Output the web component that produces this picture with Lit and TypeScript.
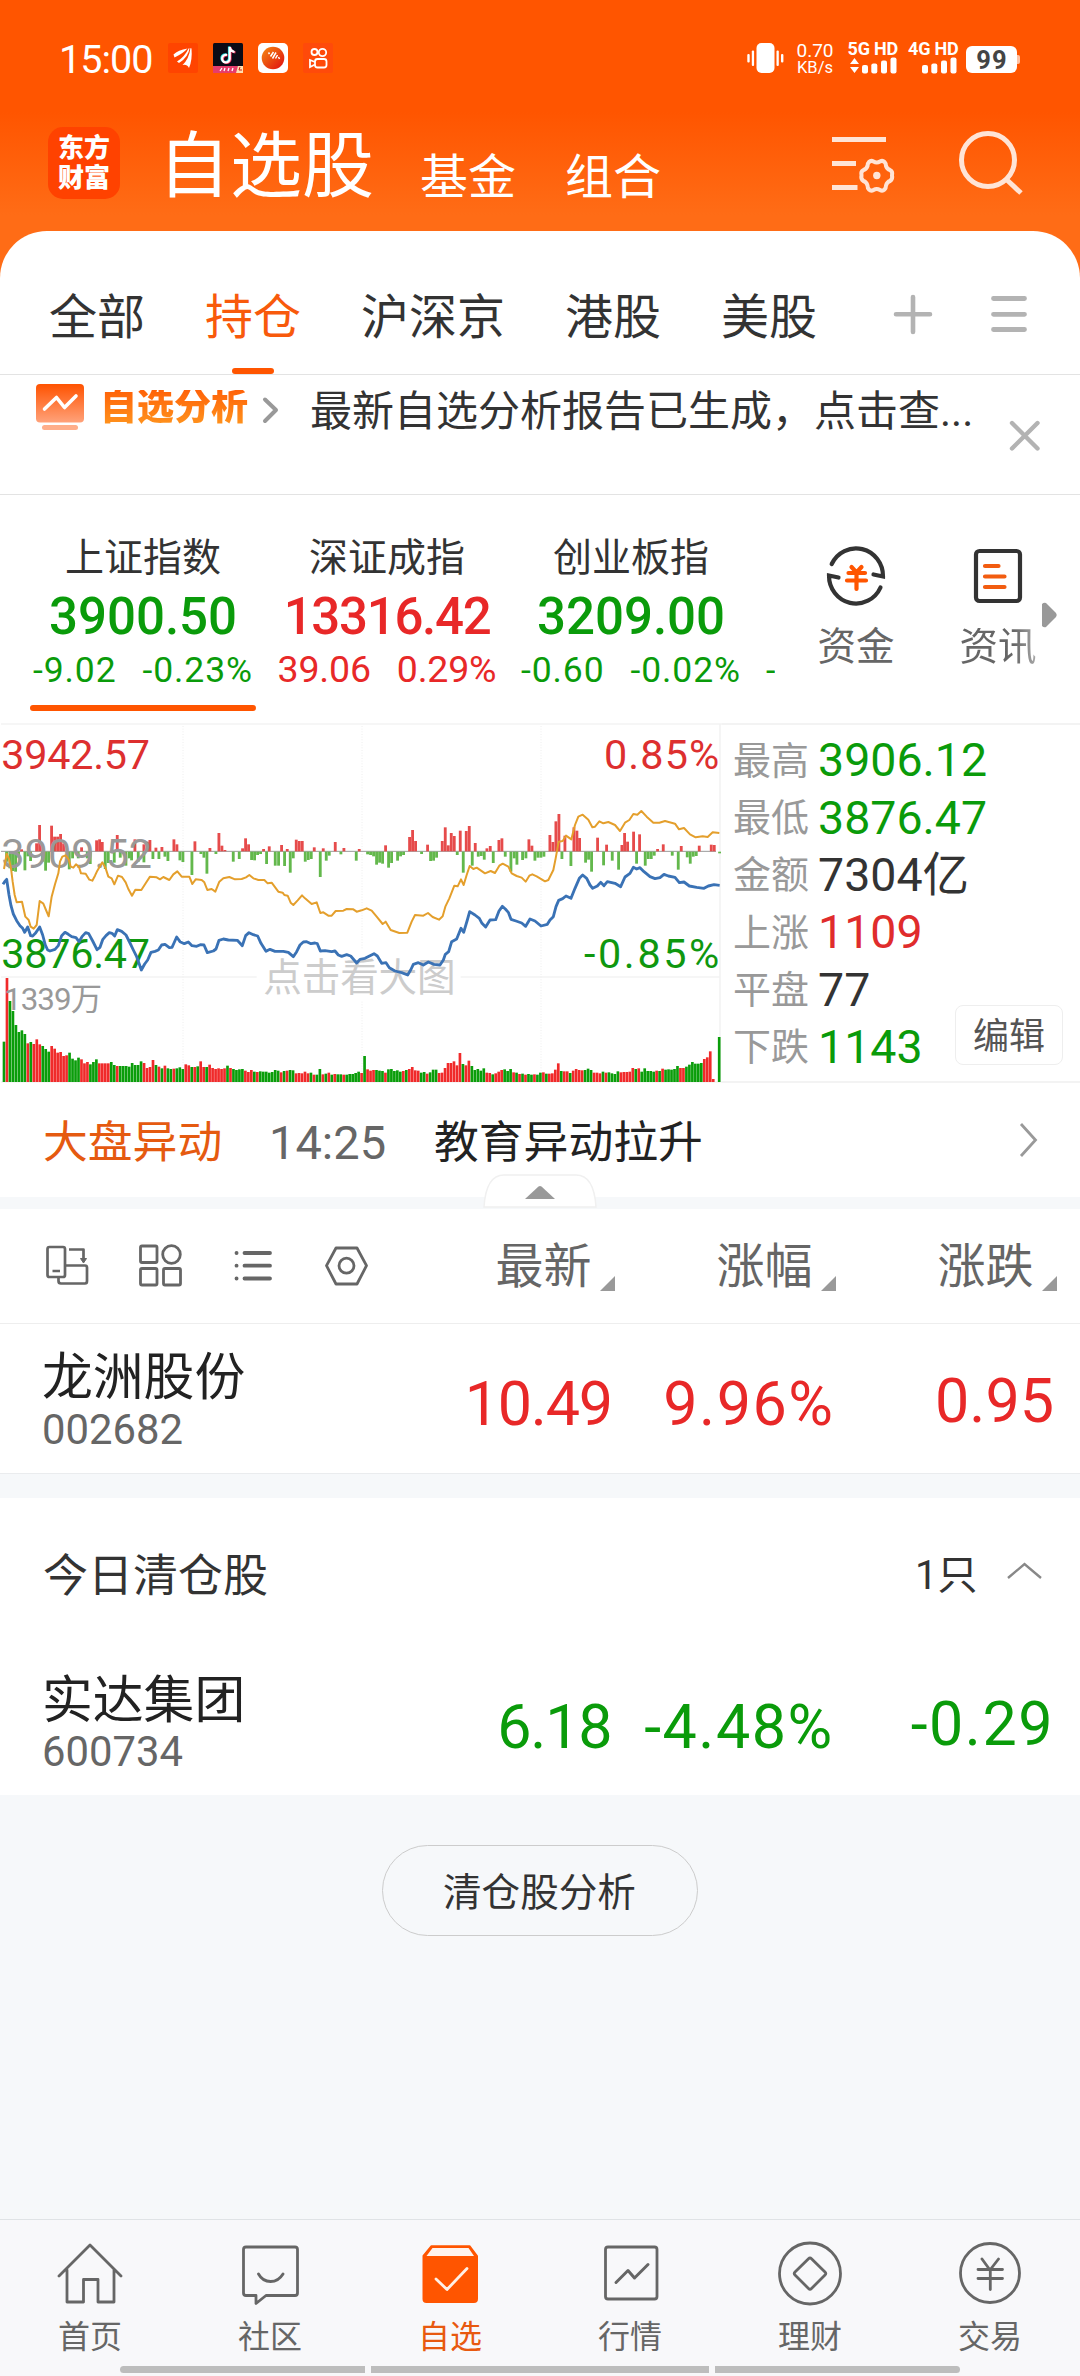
import { LitElement, html, css, svg } from "lit";
import { customElement } from "lit/decorators.js";

const BLUE =
  "9,508 14,500 20,493 27,540 33,572 40,597 50,617 60,632 68,640 74,652 83,636 92,662 98,663 106,655 119,636 128,660 136,690 143,705 150,708 165,703 175,692 185,662 195,652 205,658 215,665 228,668 237,680 246,665 257,653 266,656 278,678 291,704 300,697 308,674 318,662 328,653 336,655 344,663 352,644 365,649 378,660 390,684 400,705 410,725 418,748 424,765 434,747 443,735 453,712 465,709 475,705 485,690 495,688 508,698 516,697 522,684 530,666 540,680 553,686 565,681 576,692 590,694 601,689 612,690 622,713 640,708 648,702 657,676 670,672 685,675 712,676 727,692 737,662 747,653 760,659 773,663 783,685 798,709 810,703 825,709 850,709 865,712 880,725 890,710 900,690 910,681 920,680 933,686 945,684 952,686 961,708 975,707 995,710 1005,708 1015,720 1025,724 1040,719 1052,723 1070,744 1080,733 " +
  "1095,730 1110,722 1122,716 1132,723 1145,745 1158,743 1168,758 1185,768 1205,773 1223,780 1232,765 1240,748 1255,743 1270,750 1285,741 1302,748 1320,750 1330,735 1336,718 1346,710 1355,680 1370,672 1383,640 1391,652 1402,615 1409,590 1425,600 1438,610 1446,625 1457,636 1470,615 1487,614 1497,588 1507,574 1516,582 1525,592 1533,613 1548,618 1565,624 1577,634 1590,612 1605,618 1623,633 1642,628 1650,615 1660,605 1668,575 1676,556 1688,551 1698,543 1713,550 1725,520 1738,490 1748,480 1760,490 1770,510 1778,520 1792,513 1802,502 1812,512 1822,500 1845,505 1862,515 1875,486 1890,475 1900,457 1910,462 1920,458 1932,470 1950,485 1965,491 1980,488 1992,478 2005,483 2025,487 2038,503 2052,501 2068,513 2090,517 2112,520 2125,513 2142,509 2159,511";

const GOLD =
  "12,462 20,416 27,432 33,460 38,500 44,540 50,562 66,560 76,605 86,615 92,635 101,641 110,630 119,558 130,566 138,585 146,604 155,545 165,508 175,475 180,440 187,425 197,421 207,435 212,455 220,458 228,448 237,456 243,475 257,476 268,494 277,497 285,482 292,467 307,442 317,460 325,485 335,490 343,508 354,482 366,486 377,502 385,522 396,542 406,524 424,525 438,503 450,485 470,487 480,493 490,486 508,495 520,478 532,469 545,485 568,485 577,507 587,493 605,495 613,502 622,525 635,522 646,530 658,500 670,490 688,486 705,493 725,492 738,487 748,480 760,490 775,495 793,495 803,505 815,503 835,530 848,533 853,540 863,542 872,563 880,570 893,556 906,541 915,550 935,567 950,562 961,594 970,592 985,602 995,602 1007,588 1030,587 1040,582 1060,583 1070,590 " +
  "1085,586 1100,580 1115,587 1130,605 1148,627 1157,620 1172,645 1198,654 1222,653 1235,620 1245,600 1270,602 1284,594 1298,606 1317,614 1328,604 1336,575 1348,550 1363,512 1373,514 1383,493 1391,510 1400,480 1409,453 1420,462 1430,458 1455,475 1472,468 1485,474 1498,452 1508,446 1525,455 1535,475 1550,483 1565,488 1577,500 1588,482 1597,478 1610,484 1635,499 1645,495 1660,465 1667,430 1676,380 1688,378 1698,362 1714,373 1725,330 1735,305 1748,299 1765,314 1777,337 1785,335 1798,319 1810,325 1825,321 1845,330 1860,348 1875,323 1888,315 1900,297 1912,299 1924,288 1940,305 1960,323 1978,323 1995,318 2025,326 2037,343 2052,339 2070,358 2087,367 2108,364 2123,366 2138,352 2158,354";

const GAINS =
  "65,403 110,385 119,330 128,390 155,332 164,365 173,365 182,357 191,385 245,397 290,376 299,373 307,381 352,360 405,373 432,388 442,380 450,375 468,398 486,396 522,373 531,388 585,379 630,399 657,354 666,392 675,405 728,400 737,370 746,388 791,402 808,394 845,390 862,402 889,374 898,378 907,378 943,397 970,400 1006,381 1032,399 1078,402 " +
  "1157,391 1229,366 1238,345 1247,378 1283,389 1327,378 1336,337 1345,391 1354,354 1363,363 1381,347 1399,348 1408,333 1426,384 1461,400 1471,393 1497,375 1506,370 1587,373 1596,392 1650,360 1659,381 1668,319 1677,297 1695,362 1722,337 1731,347 1739,369 1793,368 1820,389 1866,390 1874,354 1883,380 1901,350 1919,358 1973,402 1990,388 2044,393 2098,392 2134,389 2143,390";

const LOSSES =
  "20,440 30,460 38,468 47,470 56,428 75,466 84,424 92,438 128,440 137,467 146,443 208,463 218,430 235,430 262,430 271,447 316,462 325,444 343,443 361,428 378,452 388,430 395,436 415,440 432,442 459,432 477,432 495,425 504,438 540,436 549,441 576,480 603,417 612,428 621,476 648,417 700,440 718,432 755,435 764,436 773,420 782,417 800,447 826,452 836,452 854,453 871,473 880,430 916,440 925,435 934,432 961,486 979,437 988,422 1023,418 1069,437 " +
  "1103,418 1112,420 1121,424 1130,449 1139,443 1148,446 1166,458 1175,444 1193,437 1202,424 1211,420 1265,417 1292,438 1301,437 1310,428 1372,420 1390,473 1417,452 1435,425 1444,423 1453,434 1480,444 1516,425 1533,470 1543,430 1551,449 1568,435 1578,430 1605,437 1614,428 1623,428 1632,425 1686,432 1713,453 1757,443 1766,434 1775,470 1811,451 1837,437 1856,464 1910,446 1936,452 1945,432 1954,432 1963,422 2017,422 2035,464 2062,427 2071,446 2080,425 2089,423 2159,415";

const VOLUME =
  "980g 789r 858g 888g 930g 951g 946g 957g 985r 981g 987r 973r 988r 993g 1002g 1010g 993r 1001r 1013r 1011r 1023r 1021r 1013g 1031g 1036g 1028g 1033r 1045r 1041r 1048g 1041g 1033g 1045r 1045r 1045r 1045r 1041g 1050g 1053r 1053g 1053g 1053g 1055g 1044g 1050g 1050g 1039g 1044r 1059r 1056r 1035r 1050g 1055r 1060g 1052r 1060g 1062g 1061r 1060g 1057g 1062g 1048r 1051r 1056g 1056r 1054g 1039r 1056r 1056g 1049r 1059r 1062r 1060r 1062r 1060r 1052g 1059r 1062g 1065g 1063g 1062g 1067r 1071r 1065r 1070g 1071r 1069g 1070g 1070g 1073g 1071g 1065g 1067g 1072r 1068g 1067r 1065g 1066g 1075r 1074r 1075r 1070r 1075r 1073g 1079r 1079g 1062g 1078r 1076g 1073r 1079g 1077r 1078g 1078g 1079r 1079g 1077g 1077g 1074g 1070g 1074r 1023g " +
  "1063r 1067r 1065r 1065g 1067g 1068g 1073r 1063g 1062g 1068g 1066g 1070g 1068r 1065g 1062r 1056r 1066r 1067r 1073g 1071g 1076r 1072g 1064g 1064g 1074r 1073r 1059r 1044r 1044r 1039r 1051r 1014r 1047g 1051r 1037r 1053g 1065g 1062g 1067g 1060g 1073r 1074r 1078g 1075r 1070r 1065r 1063g 1068g 1062g 1072r 1073g 1077r 1076g 1079r 1077g 1079g 1078r 1079g 1073g 1072r 1076g 1076r 1075r 1064r 1045r 1068g 1069r 1069r 1074g 1067r 1062r 1065r 1066r 1065g 1061g 1065g 1073r 1073r 1075r 1070g 1073r 1072g 1075g 1077g 1069g 1072r 1071r 1071r 1070r 1059r 1062g 1060r 1070g 1060g 1068g 1068g 1070g 1067r 1068g 1061r 1064g 1063g 1064g 1062g 1053g 1059r 1059r 1055g 1049g 1041g 1046g 1046g 1044g 1032r 1027r 1009r 1092r 1101r 966g";

const pairs = (s: string) => s.split(" ").map((p) => p.split(",").map(Number));

@customElement("index-chart")
class IndexChart extends LitElement {
  static styles = css`
    :host { display: block; width: 722px; height: 360px; }
    svg { display: block; }
    text { font-family: Roboto, "Noto Sans CJK SC", sans-serif; font-size: 124px; }
    .grid { stroke: #f3f3f3; stroke-width: 5; fill: none; }
    .dots { stroke: #eeeeee; stroke-width: 3; stroke-dasharray: 3 5; }
    .zero { stroke: #999; stroke-width: 3; }
    .gain { fill: #e64b4b; }
    .loss { fill: #63b84c; }
    .vr { fill: #f02a2a; }
    .vg { fill: #0a9d0a; }
    .red { fill: #dd2f2f; }
    .green { fill: #0f970f; }
    .grey { fill: #999; }
    .hint { fill: #ccc; font-size: 116px; }
    .small { font-size: 94px; fill: #999; }
    .line { fill: none; stroke-linejoin: round; }
    .blue { stroke: #3a72b5; stroke-width: 8.5; }
    .gold { stroke: #e49f2c; stroke-width: 6; }
  `;
  render() {
    return html`<svg width="722" height="360" viewBox="0 24 2166 1080">
      <path class="grid" d="M3 27H2166M3 786H770M1382 786H2160M3 1101H2166M2160 27V1101" />
      <path class="dots" d="M549 33V1098M1086 33V700M1086 860V1098M1623 33V1098" />
      <text x="4" y="162" class="red" textLength="446">3942.57</text>
      <text x="2158" y="162" class="red" text-anchor="end" textLength="346">0.85%</text>
      <path class="zero" d="M3 409H2148" />
      ${pairs(GAINS).map(([x, y]) => svg`<rect class="gain" x=${x - 4.5} y=${y} width="8.5" height=${409 - y} />`)}
      ${pairs(LOSSES).map(([x, y]) => svg`<rect class="loss" x=${x - 4.5} y="410" width="8.5" height=${y - 410} />`)}
      ${VOLUME.split(" ").map((v, i) => {
        const top = parseInt(v);
        return svg`<rect class=${v.endsWith("r") ? "vr" : "vg"} x=${8 + i * 8.94} y=${top} width="8" height=${1101 - top} />`;
      })}
      <text x="4" y="460" class="grey" textLength="452">3909.52</text>
      <text x="4" y="758" class="green" textLength="446">3876.47</text>
      <text x="2158" y="758" class="green" text-anchor="end" textLength="406">-0.85%</text>
      <text x="12" y="885" class="small" textLength="294">1339万</text>
      <text x="790" y="829" class="hint" textLength="577">点击看大图</text>
      <polyline class="line gold" points=${GOLD} />
      <polyline class="line blue" points=${BLUE} />
    </svg>`;
  }
}

const INDICES = [
  { name: "上证指数", value: "3900.50", diff: "-9.02", pct: "-0.23%", tone: "down" },
  { name: "深证成指", value: "13316.42", diff: "39.06", pct: "0.29%", tone: "up" },
  { name: "创业板指", value: "3209.00", diff: "-0.60", pct: "-0.02%", tone: "down" },
];

const STATS = [
  ["最高", "3906.12", "down"],
  ["最低", "3876.47", "down"],
  ["金额", "7304亿", ""],
  ["上涨", "1109", "up"],
  ["平盘", "77", ""],
  ["下跌", "1143", "down"],
];

const NAV = [
  { label: "首页", icon: svg`<path d="M2 34 33 3 64 34M10 28V60H26.5V37.500H41V60H57V28" />` },
  { label: "社区", icon: svg`<path d="M9 5H58Q60.500 5 60.500 7.500V51Q60.500 53.500 58 53.500H29L19 61.500V53.500H9Q6.500 53.500 6.500 51V7.500Q6.500 5 9 5ZM21.500 32C27 42 40 42 46 32" />` },
  { label: "自选", icon: svg`<path d="M14.500 4.200H52.500L60 14V57Q60 60 57 60H9.500Q6.500 60 6.500 57V14Z" fill="#ff5500" stroke="#ff5500" stroke-width="2"/><path d="M15.500 6H51.500L57 14H9.500Z" fill="#fff4ee" stroke="none"/><path d="M19 37 30 47.500 50 26.500" stroke="#fff0e6" stroke-width="2.800"/>` },
  { label: "行情", icon: svg`<rect x="8.500" y="5" width="51.500" height="52" rx="2.500"/><path d="M19 40.500 31 28.500 37.500 36 51 22.500" stroke-width="3"/>` },
  { label: "理财", icon: svg`<circle cx="33" cy="31.500" r="30.500"/><path d="M31.500 16.800Q33 15.300 34.500 16.800L48 30Q49.500 31.500 48 33L34.500 46.500Q33 48 31.500 46.500L18 33Q16.500 31.500 18 30Z"/>` },
  { label: "交易", icon: svg`<circle cx="33" cy="31" r="29.500"/><path d="M25 17 33 28 41.500 17M21 27.500H45.500M21 36.500H45.500M33.300 28V47.500"/>` },
];

@customElement("app-root")
class AppRoot extends LitElement {
  static styles = css`
    :host { display: block; }
    * { box-sizing: border-box; }
    .app {
      width: 1080px; height: 2376px; overflow: hidden; display: flex; flex-direction: column;
      font-family: Roboto, "Noto Sans CJK SC", sans-serif; line-height: 1; color: #333; white-space: nowrap;
      background: linear-gradient(#ff5500 0, #ff5500 112px, #ff6c16 215px, #ff6c16 290px, #f6f8fa 291px);
    }
    svg { display: block; flex: none; overflow: visible; }
    .up { color: #e82828; }
    .down { color: #0a9b0a; }

    .status { display: flex; height: 118px; padding: 39px 60px 0 59px; color: #fff; flex: none; }
    .clock { font-size: 39.500px; letter-spacing: -1px; width: 109px; padding-top: 1px; }
    .apps { display: flex; gap: 15px; padding-top: 4px; }
    .sys { margin-left: auto; display: flex; align-items: flex-start; }
    .vib { margin-top: 4px; }
    .rate { width: 46px; text-align: center; margin: 3px 9.500px 0 8px; display: flex; flex-direction: column; align-items: center; }
    .rate .a { font-size: 19px; line-height: 17px; }
    .rate .b { font-size: 16.500px; line-height: 17px; }
    .sim { width: 50px; margin-right: 10.500px; }
    .sim + .sim { margin-right: 8px; }
    .sim .net { font-size: 18px; font-weight: 700; line-height: 19px; letter-spacing: -.2px; height: 18px; }
    .battery {
      margin-top: 7px; width: 51px; height: 27px; border-radius: 6px; background: #fff; color: #444;
      font-weight: 700; font-size: 25.500px; line-height: 28px; text-align: center; letter-spacing: 1px; padding-left: 1px;
    }
    .nub { width: 3px; height: 9px; margin-top: 16px; background: #ffc3a5; border-radius: 0 2px 2px 0; }

    .head { display: flex; height: 113px; padding: 9px 0 0 48px; color: #fff; flex: none; }
    .logo {
      width: 72px; height: 72px; border-radius: 15px; background: #ff4200; display: grid;
      font-weight: 900; font-size: 26px; text-align: center; line-height: 29px; padding-top: 7px; align-content: start;
    }
    .logo span { height: 30px; }
    .big { font-size: 72px; margin: 4px 0 0 38px; width: 262px; }
    .mid { font-size: 48px; margin-top: 27px; width: 145px; }
    .cfg { margin: 10px 0 0 122px; }
    .find { margin: 3px 0 0 71px; }

    .card { background: #fff; border-radius: 47px 47px 0 0; flex: none; }
    .tabs { height: 144px; border-bottom: 1px solid #e3e3e3; display: flex; padding: 63px 0 0 49px; font-size: 48px; }
    .tab { margin-right: 60px; display: flex; flex-direction: column; align-items: center; }
    .tab.on { color: #f85a0c; }
    .tab.on::after { content: ""; width: 42px; height: 6px; border-radius: 3px; background: #ff5500; margin-top: 26px; }
    .plus { margin: 1px 0 0 16px; }
    .menu { margin: 1px 0 0 58px; }
    .notice { height: 120px; border-bottom: 1px solid #e3e3e3; display: flex; padding: 9px 0 0 36px; }
    .ana {
      font-size: 37px; font-weight: 900; margin: 6px 0 0 16px; width: 163px; height: 40px; line-height: 36px;
      color: transparent; background: linear-gradient(#ff6208, #ff9a20); background-clip: text; -webkit-background-clip: text;
    }
    .msg { font-size: 42px; margin: 7px 0 0 31px; width: 700px; }

    .market { height: 228px; display: flex; padding-left: 21px; }
    .indices { width: 754px; overflow: hidden; display: flex; }
    .idx { width: 244px; flex: none; padding-top: 44px; display: flex; flex-direction: column; align-items: center; }
    .idx .n { font-size: 39px; }
    .idx .v { font-size: 51px; font-weight: 500; margin-top: 13px; letter-spacing: 0; }
    .idx .v.up { letter-spacing: -1.300px; }
    .idx .d { display: flex; gap: 26px; font-size: 35.500px; height: 35px; margin-top: 11px; letter-spacing: .9px; }
    .idx .d.up { font-size: 37.500px; margin-top: 9px; height: 37px; letter-spacing: -.2px; }
    .idx i { width: 226px; height: 6px; border-radius: 3px; background: #ff5500; margin-top: 17px; flex: none; }
    .next { font-size: 34px; color: #0a9b0a; padding: 158px 0 0 13px; }
    .link { display: flex; flex-direction: column; align-items: center; font-size: 38.500px; color: #666; width: 80px; padding-top: 50px; }
    .link svg { margin-bottom: 20px; }
    .l1 { margin-left: 41px; }
    .l2 { margin-left: 62px; }
    .l2 .t { color: transparent; background: linear-gradient(90deg, #666 70%, #aaa); background-clip: text; -webkit-background-clip: text; }
    .tri { margin: 107px 0 0 4px; }

    .quote { height: 360px; display: flex; }
    .side { flex: 1; border-top: 2px solid #f3f3f3; border-bottom: 2px solid #f3f3f3; display: flex; padding: 7px 0 0 11px; }
    .stats { width: 222px; flex: none; }
    .stat { height: 57.300px; display: flex; align-items: center; }
    .k { font-size: 38px; color: #999; width: 85px; flex: none; }
    .x { font-size: 46.500px; color: #333; }
    .x.up { color: #e02c2c; }
    .x.down { color: #0a9b0a; }
    .edit {
      width: 108px; height: 60px; border: 1.500px solid #eee; border-radius: 8px; font-size: 36px; color: #555;
      display: flex; align-items: center; justify-content: center; margin-top: 273px; padding-top: 3px; flex: none;
    }
    .move { height: 114px; display: flex; padding: 38px 0 0 43px; font-size: 44.800px; background: #fff; flex: none; }
    .move .o { color: #e55a10; width: 226px; }
    .move .time { font-size: 47px; color: #666; width: 165px; margin-top: -2px; }
    .move .txt { color: #222; width: 585px; }
    .band { height: 12px; background: #f6f8fa; flex: none; display: flex; justify-content: center; position: relative; }
    .fold { position: absolute; top: -23px; left: 484px; }
    .tools { height: 115px; background: #fff; border-bottom: 1px solid #eee; display: flex; padding: 34px 0 0 45px; color: #666; flex: none; }
    .tools > svg { margin-top: 0; width: 44px; margin-right: 48.900px; }
    .col { width: 120px; font-size: 48px; display: flex; align-items: flex-start; margin-right: 101px; }
    .cols { display: flex; margin-left: 79px; }
    .col svg { margin: 33px 0 0 8px; }

    .row { display: flex; height: 149px; background: #fff; padding: 29px 26px 0 42px; flex: none; }
    .row.low { padding-top: 30px; }
    .row .who { width: 260px; }
    .row .nm { font-size: 50.800px; color: #222; }
    .row .code { font-size: 41.800px; color: #666; margin-top: 5px; }
    .row.low .code { margin-top: 4px; }
    .num { font-size: 61px; text-align: right; padding-top: 21px; }
    .p1 { width: 311px; letter-spacing: -1.200px; }
    .p2 { width: 223px; letter-spacing: 1.500px; }
    .p3 { width: 220px; padding-top: 18px; }
    .p3.down { letter-spacing: 1.500px; width: 221px; }
    .gap { height: 25px; background: #f6f8fa; border-top: 1px solid #eaecee; flex: none; }
    .cleared { height: 148px; background: #fff; display: flex; padding: 56px 0 0 43px; font-size: 45px; flex: none; }
    .cleared .a { width: 872px; }
    .cleared .b { width: 92px; font-size: 40px; margin-top: 2px; }
    .rest { flex: 1; background: #f6f8fa; display: flex; justify-content: center; padding-top: 50px; }
    .pill {
      width: 316px; height: 91px; border-radius: 46px; border: 1.500px solid #ccc; font-size: 38.600px;
      display: flex; align-items: center; justify-content: center; padding-right: 1px; padding-top: 5px;
    }
    .nav { height: 157px; background: #f8f8fa; border-top: 1px solid #e0e3e6; flex: none; }
    .items { display: flex; height: 146px; padding-top: 22px; }
    .item { width: 180px; display: flex; flex-direction: column; align-items: center; gap: 15px; font-size: 32px; color: #666; }
    .item svg { fill: none; stroke: #666; stroke-width: 2.800; stroke-linejoin: round; stroke-linecap: round; }
    .item.on { color: #e8590f; }
    .bars { display: grid; grid-template-columns: 245px 338px 245px; gap: 6px; padding-left: 120px; }
    .bars b { height: 7px; background: #bdbdbd; }
    .bars b:first-child { border-radius: 4px 0 0 4px; }
    .bars b:last-child { border-radius: 0 4px 4px 0; }
  `;

  private status() {
    return html`<div class="status">
      <div class="clock">15:00</div>
      <div class="apps">
        <svg width="30" height="30"><rect width="30" height="30" rx="2" fill="#ff4400"/><path d="M5.500 11.500Q10 7 19.500 5.500Q15 10.500 6.500 14.500ZM9 18.500Q17 13.500 20.500 5.500L21.500 5.200Q20.500 14 11 20ZM14.500 22Q21 16 22.500 5L23.500 5.500Q24.500 17 21 25Q19 21 14.500 22Z" fill="#fff"/></svg>
        <svg width="30" height="30"><rect width="30" height="30" rx="1.500" fill="#0b0b16"/><g fill="none" stroke-width="2.200"><path d="M13.500 11.500A3.800 3.800 0 1 0 16 15.500V3.500Q16.800 7.500 20.500 8.500" stroke="#25e0e0"/><path d="M14.700 12.500A3.800 3.800 0 1 0 17.500 16.500V4.500Q18 8.500 22.500 9.500" stroke="#f0305a"/><path d="M14 12A3.800 3.800 0 1 0 16.700 16V4Q17.400 8 21.500 9" stroke="#fff"/></g><rect y="23" width="30" height="7" fill="#e63c6c"/><path d="M7 28 9 25M11 28 12 25M15 28 16 25M19 28 20 25" stroke="#fff" stroke-width="1.300"/><path d="M23 30 25 23H30V30Z" fill="#ffe0b0"/><path d="M27 24 26 27H29" stroke="#c22" fill="none"/></svg>
        <svg width="30" height="30"><defs><linearGradient id="ball" x1="0" y1="0" x2="1" y2="1"><stop offset="0" stop-color="#f58a10"/><stop offset="1" stop-color="#e00b10"/></linearGradient></defs><rect width="30" height="30" rx="5" fill="#fff"/><circle cx="15" cy="15" r="11.300" fill="url(#ball)"/><path d="M10.500 9.500 11.500 11M12.500 13.500 15.500 9M14.500 15.500 18 9.500M17.500 15.500 19.500 12M20.500 14 21.500 16" stroke="#fff" stroke-width="1.500"/></svg>
        <svg width="30" height="30"><rect width="30" height="30" rx="2" fill="#ff4a0a"/><g fill="none" stroke="#fff" stroke-width="1.800"><circle cx="11.500" cy="9" r="3"/><circle cx="19.500" cy="9.500" r="3.700"/><rect x="12" y="16" width="11.500" height="8.500" rx="2.500"/><path d="M12 19 7 17V24L12 21.500"/></g></svg>
      </div>
      <div class="sys">
        <svg class="vib" width="37" height="30" fill="#fff"><rect x="9.500" width="18" height="30" rx="5"/><rect x="4.800" y="7.500" width="2.300" height="15.500" rx="1"/><rect x=".3" y="11" width="2.400" height="8.500" rx="1"/><rect x="29.500" y="7.500" width="2.300" height="15.500" rx="1"/><rect x="34" y="11" width="2.400" height="8.500" rx="1"/></svg>
        <div class="rate"><span class="a">0.70</span><span class="b">KB/s</span></div>
        ${["5G HD", "4G HD"].map((n, i) => html`<div class="sim"><div class="net">${n}</div>
          <svg width="50" height="17" fill="#fff">
            ${i === 0 ? svg`<path d="M2 7 6.500 1 11 7ZM2 10 6.500 16 11 10Z"/>` : ""}
            <rect x="14" y="8" width="6" height="8.500" rx="2"/><rect x="23.300" y="6.500" width="6" height="10" rx="2"/><rect x="33" y="3.500" width="6" height="13" rx="2"/><rect x="42.500" y=".5" width="6" height="16" rx="2"/>
          </svg></div>`)}
        <div class="battery">99</div><div class="nub"></div>
      </div>
    </div>`;
  }

  private head() {
    return html`<div class="head">
      <div class="logo"><span>东方</span><span>财富</span></div>
      <div class="big">自选股</div>
      <div class="mid">基金</div>
      <div class="mid">组合</div>
      <svg class="cfg" width="62" height="56" fill="none" stroke="#ffe4d6" stroke-width="5">
        <path d="M0 2.500H54M0 26.500H24M0 50.500H25.500"/>
        <path stroke-width="4" stroke-linejoin="round" d="M37 25Q39 23 41.500 24.500Q44.700 26.500 48 24.500Q50.500 23 52.500 25Q54 26.500 54 29Q55 32 58 33Q61 34.500 60 38.500Q61 42 58 44Q55 45 54 48.500Q54 51 52.500 52.500Q50.500 54.500 48 53Q44.700 51 41.500 53Q39 54.500 37 52.500Q35.500 51 35.500 48.500Q34.500 45 31.500 44Q28.500 42 29.500 38.500Q28.500 34.500 31.500 33Q34.500 32 35.500 29Q35.500 26.500 37 25Z"/>
        <circle cx="44.800" cy="38.500" r="3.700" fill="#ffe4d6" stroke="none"/>
      </svg>
      <svg class="find" width="64" height="64" fill="none" stroke="#ffe4d6" stroke-width="5"><circle cx="23" cy="30" r="26.500"/><path d="M42 50 56 63"/></svg>
    </div>`;
  }

  render() {
    return html`<div class="app">
      ${this.status()}${this.head()}
      <div class="card">
        <div class="tabs">
          ${["全部", "持仓", "沪深京", "港股", "美股"].map((t, i) => html`<div class="tab ${i === 1 ? "on" : ""}">${t}</div>`)}
          <svg class="plus" width="40" height="40" stroke="#b3b3b3" stroke-width="4.600" stroke-linecap="round"><path d="M3 19.300H37M20 2V37"/></svg>
          <svg class="menu" width="38" height="40" stroke="#b3b3b3" stroke-width="4.800" stroke-linecap="round"><path d="M2.500 3.500H33.500M2.500 19.300H33.500M2.500 34.500H33.500"/></svg>
        </div>
        <div class="notice">
          <svg width="48" height="47"><defs><linearGradient id="g" x2="0" y2="1"><stop stop-color="#ff5200"/><stop offset="1" stop-color="#ffa27a"/></linearGradient></defs><rect width="48" height="38.500" rx="4" fill="url(#g)"/><rect x="6" y="41" width="36" height="5" rx="2.500" fill="#ffae8a"/><path d="M8.500 25 20.500 13.500 28.500 23.500 40 12" fill="none" stroke="#fff" stroke-width="3.600" stroke-linecap="round" stroke-linejoin="round"/></svg>
          <div class="ana">自选分析</div>
          <svg width="16" height="40" fill="none" stroke="#999" stroke-width="4" stroke-linecap="round" stroke-linejoin="round"><path d="M2 15.500 13 26 2 37"/></svg>
          <div class="msg">最新自选分析报告已生成，点击查...</div>
          <svg width="30" height="70" stroke="#b3b3b3" stroke-width="4.400" stroke-linecap="round"><path d="M2 39 27.500 64.500M27.500 39 2 64.500"/></svg>
        </div>
        <div class="market">
          <div class="indices">
            ${INDICES.map((q, i) => html`<div class="idx"><div class="n">${q.name}</div><div class="v ${q.tone}">${q.value}</div>
              <div class="d ${q.tone}"><span>${q.diff}</span><span>${q.pct}</span></div>${i === 0 ? html`<i></i>` : ""}</div>`)}
            <div class="next">-</div>
          </div>
          <div class="link l1">
            <svg width="60" height="63" fill="none" stroke="#333" stroke-width="4.200" stroke-linecap="round"><path d="M5.700 19A27 27.700 0 0 1 57 31.500L47.500 29.500M54.500 42.500A27 27.700 0 0 1 3 30.500L12.500 32.500"/><path d="M25.500 22 30.500 27.500 35.500 22M22.500 28H39M21 35.500H40M30.500 27.500V44" stroke="#ff5500" stroke-width="4.200"/></svg>
            <div>资金</div>
          </div>
          <div class="link l2">
            <svg width="50" height="63" fill="none" stroke="#333" stroke-width="4.200" stroke-linecap="round"><rect x="3" y="6" width="44" height="50" rx="3.500"/><path d="M12 21H25.500M12 31.500H31.500M12 42H31.500" stroke="#f25c10"/></svg>
            <div class="t">资讯</div>
          </div>
          <svg class="tri" width="16" height="26"><path d="M0 2Q2 0 4 1L14 11Q15.500 13 14 15L4 25Q2 26 0 24Z" fill="#999"/></svg>
        </div>
        <div class="quote">
          <index-chart></index-chart>
          <div class="side">
            <div class="stats">${STATS.map(([k, v, t]) => html`<div class="stat"><span class="k">${k}</span><span class="x ${t}">${v}</span></div>`)}</div>
            <div class="edit">编辑</div>
          </div>
        </div>
      </div>
      <div class="move">
        <div class="o">大盘异动</div><div class="time">14:25</div><div class="txt">教育异动拉升</div>
        <svg width="20" height="40" fill="none" stroke="#999" stroke-width="2.800"><path d="M2 3 16.500 19 2 35"/></svg>
      </div>
      <div class="band">
        <svg class="fold" width="112" height="34"><path d="M0 33Q2 1 20 1H92Q110 1 112 33Z" fill="#fff" stroke="#f0f0f0" stroke-width="1.500"/><path d="M41 25 54.500 12.500Q56 11.500 57.500 12.500L71 25Z" fill="#999"/></svg>
      </div>
      <div class="tools">
        <svg width="44" height="48" fill="none" stroke="#666" stroke-width="2.700" stroke-linejoin="round"><rect x="2.500" y="4" width="17.500" height="30" rx="2"/><path d="M7.500 28H15M24 6.500H38.500V17M20.500 22.500H40Q42 22.500 42 24.500V38Q42 40.500 40 40.500H16Q13.500 40.500 13.500 38V34.500"/><path d="M35.500 15.500H41.500L38.500 20Z" fill="#666" stroke-width="1"/></svg>
        <svg width="44" height="48" fill="none" stroke="#666" stroke-width="2.800"><rect x="2.500" y="3" width="16.500" height="16.500" rx="1.500"/><circle cx="33.500" cy="11.500" r="8.800"/><rect x="2.500" y="25.500" width="16.500" height="16.500" rx="1.500"/><rect x="25.500" y="25.500" width="17" height="16.500" rx="1.500"/></svg>
        <svg width="44" height="48" fill="none" stroke="#666" stroke-width="3.800" stroke-linecap="round"><path d="M13.500 10H39M13.500 22.700H39M13.500 35.500H39M5.500 10H5.600M5.500 22.700H5.600M5.500 35.500H5.600"/></svg>
        <svg width="44" height="48" fill="none" stroke="#666" stroke-width="2.800" stroke-linejoin="round"><path d="M12 5H33L42.500 22.700 33 41H12L2.500 22.700Z"/><circle cx="22.500" cy="22.700" r="7.500"/></svg>
        <div class="cols">${["最新", "涨幅", "涨跌"].map((c) => html`<div class="col">${c}<svg width="15" height="16"><path d="M15 0V15H0Z" fill="#999"/></svg></div>`)}</div>
      </div>
      <div class="row">
        <div class="who"><div class="nm">龙洲股份</div><div class="code">002682</div></div>
        <div class="num p1 up">10.49</div><div class="num p2 up">9.96%</div><div class="num p3 up">0.95</div>
      </div>
      <div class="gap"></div>
      <div class="cleared"><div class="a">今日清仓股</div><div class="b">1只</div>
        <svg width="36" height="30" fill="none" stroke="#888" stroke-width="2.400"><path d="M1 24 17.500 10 34 24"/></svg></div>
      <div class="row low">
        <div class="who"><div class="nm">实达集团</div><div class="code">600734</div></div>
        <div class="num p1 down">6.18</div><div class="num p2 down">-4.48%</div><div class="num p3 down">-0.29</div>
      </div>
      <div class="rest"><div class="pill">清仓股分析</div></div>
      <div class="nav">
        <div class="items">${NAV.map((n, i) => html`<div class="item ${i === 2 ? "on" : ""}"><svg width="66" height="64">${n.icon}</svg><span>${n.label}</span></div>`)}</div>
        <div class="bars"><b></b><b></b><b></b></div>
      </div>
    </div>`;
  }
}
